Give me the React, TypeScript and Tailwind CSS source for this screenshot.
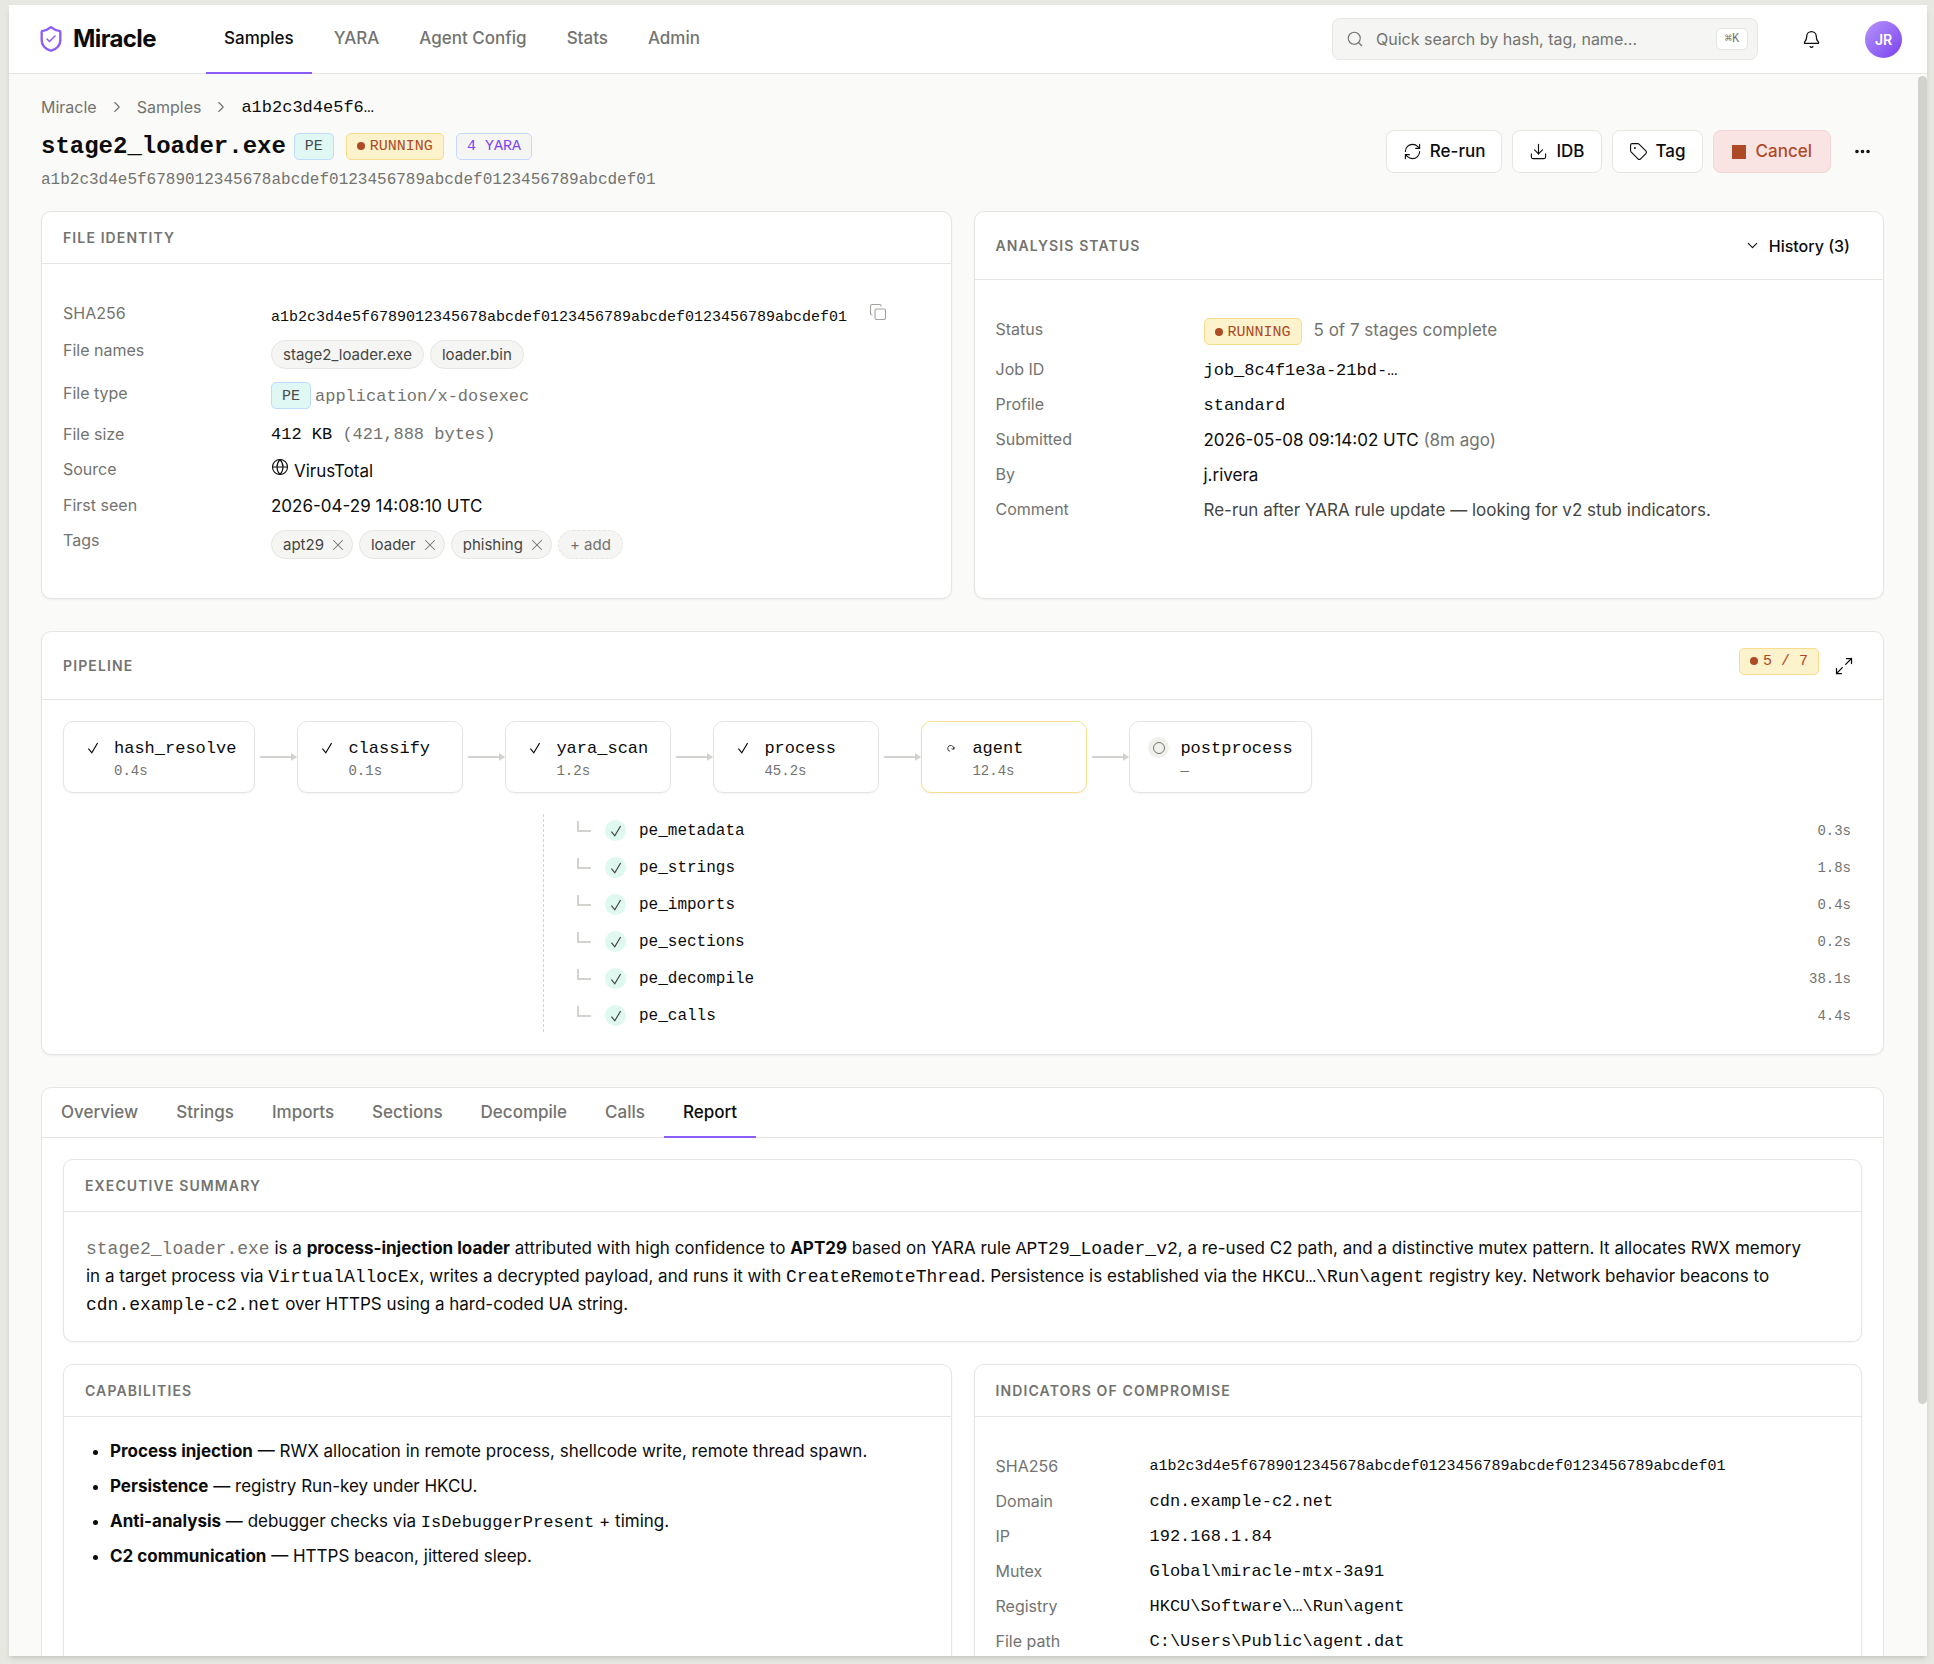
import React from 'react';
import {
    Bell,
    Check,
    ChevronDown,
    ChevronRight,
    Copy,
    Download,
    Ellipsis,
    Globe,
    Maximize2,
    RefreshCw,
    Search,
    Shield,
    Tag,
    X,
} from 'lucide-react';

const mono = "font-['Liberation_Mono',monospace]";

const navItems = ['Samples', 'YARA', 'Agent Config', 'Stats', 'Admin'];
const tabs = ['Overview', 'Strings', 'Imports', 'Sections', 'Decompile', 'Calls', 'Report'];
const sha = 'a1b2c3d4e5f6789012345678abcdef0123456789abcdef0123456789abcdef01';

const stages = [
    { name: 'hash_resolve', time: '0.4s', state: 'done' },
    { name: 'classify', time: '0.1s', state: 'done' },
    { name: 'yara_scan', time: '1.2s', state: 'done' },
    { name: 'process', time: '45.2s', state: 'done' },
    { name: 'agent', time: '12.4s', state: 'running' },
    { name: 'postprocess', time: '—', state: 'pending' },
];

const subStages = [
    { name: 'pe_metadata', time: '0.3s' },
    { name: 'pe_strings', time: '1.8s' },
    { name: 'pe_imports', time: '0.4s' },
    { name: 'pe_sections', time: '0.2s' },
    { name: 'pe_decompile', time: '38.1s' },
    { name: 'pe_calls', time: '4.4s' },
];

const indicators = [
    { label: 'Domain', value: 'cdn.example-c2.net' },
    { label: 'IP', value: '192.168.1.84' },
    { label: 'Mutex', value: 'Global\\miracle-mtx-3a91' },
    { label: 'Registry', value: 'HKCU\\Software\\…\\Run\\agent' },
    { label: 'File path', value: 'C:\\Users\\Public\\agent.dat' },
];

interface CardProps {
    title: string;
    action?: React.ReactNode;
    children: React.ReactNode;
}

const Card: React.FC<CardProps> = ({ title, action, children }) => (
    <section className="min-w-0 rounded-[10px] border border-[#e5e5e2] bg-white shadow-xs">
        <header
            className={`flex items-center justify-between border-b border-[#e5e5e2] px-[21px] ${action ? 'h-[68px]' : 'h-[52px]'}`}
        >
            <h2 className="text-[14px] font-semibold tracking-[0.08em] text-[#73736f] uppercase">{title}</h2>
            {action}
        </header>
        {children}
    </section>
);

interface RowProps {
    label: string;
    height?: string;
    width?: string;
    children: React.ReactNode;
}

const Row: React.FC<RowProps> = ({ label, height = 'h-[26px]', width = 'w-[208px]', children }) => (
    <div className={`flex ${height}`}>
        <dt className={`${width} shrink-0 text-[16px] leading-[22px] text-[#73736f]`}>{label}</dt>
        <dd className="flex min-w-0 items-start text-[17px] leading-6 whitespace-nowrap text-[#0c0c0c]">{children}</dd>
    </div>
);

const PeBadge = () => (
    <span className={`${mono} flex h-[27px] items-center rounded-[5px] border border-[#bfdbfe] bg-[#dff8f4] px-[10px] pt-[2px] text-[15px] text-[#4b4b4b]`}>
        PE
    </span>
);

const RunBadge: React.FC<{ children: React.ReactNode }> = ({ children }) => (
    <span className={`${mono} flex h-[27px] items-center gap-[5px] rounded-[5px] border border-[#f7dd8b] bg-[#fcf2cb] px-[10px] text-[15px] whitespace-pre text-[#ae4a26]`}>
        <span className="size-2 rounded-full bg-[#ae4a26]" />
        <span className="pt-[2px]">{children}</span>
    </span>
);

const Chip: React.FC<{ children: React.ReactNode; removable?: boolean }> = ({ children, removable }) => (
    <span className="flex h-[29px] items-center gap-[5px] rounded-full border border-[#e5e5e2] bg-[#f5f5f3] px-[11px] text-[15px] text-[#454542]">
        {children}
        {removable && (
            <button aria-label="Remove tag" className="-mr-[6px] text-[#73736f]">
                <X size={18} strokeWidth={1.4} />
            </button>
        )}
    </span>
);

const ActionButton: React.FC<{ icon: React.ReactNode; children: React.ReactNode }> = ({ icon, children }) => (
    <button className="flex h-[43px] items-center gap-2 rounded-lg border border-[#e5e5e2] bg-white px-4 text-[17px] font-medium">
        {icon}
        {children}
    </button>
);

const CheckMark = () => (
    <svg width="12" height="12" viewBox="0 0 12 12" fill="none" stroke="currentColor" strokeWidth="1.2">
        <path d="M1.4 6.6 4.8 10.8 10.6 1" />
    </svg>
);

const StageIcon: React.FC<{ state: string }> = ({ state }) => {
    if (state === 'pending') {
        return (
            <span className="flex size-[21px] items-center justify-center rounded-full bg-[#f0f0ed]">
                <span className="size-3 rounded-full border border-[#73736f]" />
            </span>
        );
    }
    return (
        <span className="flex size-[21px] items-center justify-center">
            {state === 'done' ? (
                <CheckMark />
            ) : (
                <svg width="12" height="12" viewBox="0 0 12 12" fill="none" stroke="#454542">
                    <path d="M5.2 9.4A3 3 0 1 1 8.6 7.2M6.4 6.8 8.7 7.4 9.8 5.2" />
                </svg>
            )}
        </span>
    );
};

const Arrow = () => (
    <svg width="42" height="10" viewBox="0 0 42 10" className="shrink-0">
        <path d="M5 4H36V1L42 5L36 9V6H5Z" fill="#d2d2ce" />
    </svg>
);

const Header = () => (
    <header className="flex h-[69px] shrink-0 items-center border-b border-[#e5e5e2] bg-white pr-[25px] pl-[28px]">
        <a href="#" className="flex w-[169px] items-center gap-2">
            <span className="relative flex items-center justify-center text-[#8b5cf6]">
                <Shield size={28} strokeWidth={2} />
                <Check size={12} strokeWidth={3} className="absolute" />
            </span>
            <span className="text-[24px] font-bold tracking-tight">Miracle</span>
        </a>
        <nav className="flex h-[69px] gap-1">
            {navItems.map((item, i) => (
                <a
                    key={item}
                    href="#"
                    className={`flex items-center border-b-2 px-[18px] pt-[2px] text-[17px] font-medium ${i === 0 ? 'border-[#8b5cf6] text-[#0c0c0c]' : 'border-transparent text-[#73736f]'}`}
                >
                    {item}
                </a>
            ))}
        </nav>
        <label className="ml-auto flex h-[42px] w-[426px] items-center rounded-lg border border-[#e5e5e2] bg-[#f5f5f3] pr-[9px] pl-[13px]">
            <Search size={18} strokeWidth={1.5} className="shrink-0 text-[#73736f]" />
            <input
                aria-label="Quick search"
                placeholder="Quick search by hash, tag, name…"
                className="ml-3 min-w-0 flex-1 bg-transparent text-[16px] outline-none placeholder:text-[#73736f]"
            />
            <kbd className={`${mono} flex h-[22px] w-8 items-center justify-center rounded-[5px] border border-[#e5e5e2] bg-white text-[12px] text-[#73736f]`}>
                ⌘K
            </kbd>
        </label>
        <button aria-label="Notifications" className="ml-[44px]">
            <Bell size={19} strokeWidth={1.6} />
        </button>
        <button className="ml-[44px] flex size-[37px] items-center justify-center rounded-full bg-linear-to-br from-[#b794fb] to-[#7c3aed] text-[14px] font-semibold text-white">
            JR
        </button>
    </header>
);

const Title = () => (
    <div>
        <nav aria-label="Breadcrumb" className="flex h-6 items-center text-[16px] text-[#73736f]">
            <a href="#">Miracle</a>
            <ChevronRight size={18} strokeWidth={1.5} className="mx-[11px]" />
            <a href="#">Samples</a>
            <ChevronRight size={18} strokeWidth={1.5} className="mx-[11px]" />
            <span className={`${mono} pt-px text-[17px] text-[#0c0c0c]`}>a1b2c3d4e5f6…</span>
        </nav>
        <div className="mt-[8px] flex items-start justify-between">
            <div>
                <div className="flex h-[38px] items-center">
                    <h1 className={`${mono} mr-2 pt-px text-[24px] font-bold`}>stage2_loader.exe</h1>
                    <div className="flex gap-3">
                        <PeBadge />
                        <RunBadge>RUNNING</RunBadge>
                        <span className={`${mono} flex h-[27px] items-center rounded-[5px] border border-[#c7d7fe] bg-[#f5f5f3] px-[10px] pt-[2px] text-[15px] text-[#8045f0]`}>
                            4 YARA
                        </span>
                    </div>
                </div>
                <p className={`${mono} mt-[3px] text-[16px] leading-6 text-[#73736f]`}>{sha}</p>
            </div>
            <div className="mt-[3px] flex items-center gap-[10px]">
                <ActionButton icon={<RefreshCw size={19} strokeWidth={1.4} />}>Re-run</ActionButton>
                <ActionButton icon={<Download size={19} strokeWidth={1.4} />}>IDB</ActionButton>
                <ActionButton icon={<Tag size={19} strokeWidth={1.4} />}>Tag</ActionButton>
                <button className="flex h-[43px] items-center gap-[10px] rounded-lg border border-[#f3d5d5] bg-[#f9e3e3] px-[18px] text-[17px] font-medium text-[#ae4a26]">
                    <span className="size-[14px] bg-[#ae4a26]" />
                    Cancel
                </button>
                <button aria-label="More actions" className="flex h-[43px] w-[43px] items-center justify-center">
                    <Ellipsis size={19} strokeWidth={2.5} />
                </button>
            </div>
        </div>
    </div>
);

const FileIdentity = () => (
    <Card title="File identity">
        <dl className="flex flex-col gap-[9px] px-[21px] pt-[38px] pb-[34px]">
            <Row label="SHA256" height="h-[28px]">
                <span className={`${mono} pt-1 text-[15px]`}>{sha}</span>
                <button aria-label="Copy hash" className="mt-px ml-[22px] text-[#a3a39f]">
                    <Copy size={18} strokeWidth={1.5} />
                </button>
            </Row>
            <Row label="File names" height="h-[34px]">
                <div className="flex gap-[6px] pt-px">
                    <Chip>stage2_loader.exe</Chip>
                    <Chip>loader.bin</Chip>
                </div>
            </Row>
            <Row label="File type" height="h-[32px]">
                <PeBadge />
                <span className={`${mono} ml-1 pt-[3px] text-[#73736f]`}>application/x-dosexec</span>
            </Row>
            <Row label="File size">
                <span className={`${mono} whitespace-pre`}>
                    412 KB <span className="text-[#73736f]">(421,888 bytes)</span>
                </span>
            </Row>
            <Row label="Source" height="h-[27px]">
                <Globe size={18} strokeWidth={1.5} className="mr-[5px]" />
                <span className="pt-px">VirusTotal</span>
            </Row>
            <Row label="First seen">2026-04-29 14:08:10 UTC</Row>
            <Row label="Tags" height="h-[35px]">
                <div className="flex gap-[6px] pt-px">
                    <Chip removable>apt29</Chip>
                    <Chip removable>loader</Chip>
                    <Chip removable>phishing</Chip>
                    <button className="flex h-[29px] items-center rounded-full border border-dashed border-[#e5e5e2] bg-[#f5f5f3] px-[11px] text-[15px] text-[#73736f]">
                        + add
                    </button>
                </div>
            </Row>
        </dl>
    </Card>
);

const AnalysisStatus = () => (
    <Card
        title="Analysis status"
        action={
            <button className="flex items-center gap-2 pr-[12px] text-[16px] font-medium">
                <ChevronDown size={17} strokeWidth={1.6} />
                History (3)
            </button>
        }
    >
        <dl className="flex flex-col gap-[9px] px-[21px] pt-[38px] pb-[35px]">
            <Row label="Status" height="h-[31px]">
                <RunBadge>RUNNING</RunBadge>
                <span className="ml-3 text-[#73736f]">5 of 7 stages complete</span>
            </Row>
            <Row label="Job ID">
                <span className={`${mono} pt-px`}>job_8c4f1e3a-21bd-…</span>
            </Row>
            <Row label="Profile">
                <span className={`${mono} pt-px`}>standard</span>
            </Row>
            <Row label="Submitted">
                2026-05-08 09:14:02 UTC&nbsp;<span className="text-[#73736f]">(8m ago)</span>
            </Row>
            <Row label="By">j.rivera</Row>
            <Row label="Comment">
                <span className="text-[#454542]">Re-run after YARA rule update — looking for v2 stub indicators.</span>
            </Row>
        </dl>
    </Card>
);

const Pipeline = () => (
    <Card
        title="Pipeline"
        action={
            <div className="flex items-start gap-[7px]">
                <RunBadge>5 / 7</RunBadge>
                <button aria-label="Expand pipeline" className="flex size-9 items-center justify-center">
                    <Maximize2 size={20} strokeWidth={1.5} />
                </button>
            </div>
        }
    >
        <div className="px-[21px] pt-[21px] pb-[22px]">
            <ol className="flex items-center">
                {stages.map((stage, i) => (
                    <li key={stage.name} className="flex items-center">
                        {i > 0 && <Arrow />}
                        <div
                            className={`flex h-[72px] min-w-[166px] gap-[11px] rounded-[10px] border bg-white pt-[15px] pr-[18px] pl-[18px] shadow-xs ${stage.state === 'running' ? 'border-[#f5df8c]' : 'border-[#e5e5e2]'}`}
                        >
                            <StageIcon state={stage.state} />
                            <div className={mono}>
                                <div className="text-[17px] leading-6">{stage.name}</div>
                                <div className="text-[14px] leading-5 text-[#73736f]">{stage.time}</div>
                            </div>
                        </div>
                    </li>
                ))}
            </ol>
            <ul className={`${mono} mt-[21px] ml-[480px] flex flex-col gap-[6px] border-l border-dashed border-[#d2d2ce] py-px pr-[11px] pl-[33px]`}>
                {subStages.map((stage) => (
                    <li key={stage.name} className="flex h-[31px] items-center">
                        <span className="mb-2 h-[11px] w-[14px] border-b-2 border-l-2 border-[#d2d2ce]" />
                        <span className="mr-[13px] ml-[14px] flex size-[21px] items-center justify-center rounded-full bg-[#dff8f0] text-[#454542]">
                            <CheckMark />
                        </span>
                        <span className="pt-px text-[16px]">{stage.name}</span>
                        <span className="ml-auto pt-px text-[14px] text-[#73736f]">{stage.time}</span>
                    </li>
                ))}
            </ul>
        </div>
    </Card>
);

const Code: React.FC<{ children: React.ReactNode; size?: string }> = ({ children, size = 'text-[18px]' }) => (
    <code className={`${mono} ${size} leading-none whitespace-nowrap`}>{children}</code>
);

const Report = () => (
    <section className="rounded-[10px] border border-[#e5e5e2] bg-white">
        <div role="tablist" className="flex h-[50px] border-b border-[#e5e5e2]">
            {tabs.map((tab) => (
                <button
                    key={tab}
                    role="tab"
                    aria-selected={tab === 'Report'}
                    className={`-mb-px border-b-2 px-[19px] pt-[2px] text-[17px] font-medium ${tab === 'Report' ? 'border-[#8b5cf6] text-[#0c0c0c]' : 'border-transparent text-[#73736f]'}`}
                >
                    {tab}
                </button>
            ))}
        </div>
        <div className="flex flex-col gap-[22px] p-[21px]">
            <Card title="Executive summary">
                <p className="pt-[22px] pr-[46px] pb-[23px] pl-[22px] text-[17px] leading-7">
                    <span className="text-[#73736f]">
                        <Code>stage2_loader.exe</Code>
                    </span>{' '}
                    is a <strong>process-injection loader</strong> attributed with high confidence to <strong>APT29</strong> based
                    on YARA rule <Code>APT29_Loader_v2</Code>, a re-used C2 path, and a distinctive mutex pattern. It allocates RWX
                    memory in a target process via <Code>VirtualAllocEx</Code>, writes a decrypted payload, and runs it with{' '}
                    <Code>CreateRemoteThread</Code>. Persistence is established via the <Code>HKCU…\Run\agent</Code> registry key.
                    Network behavior beacons to <Code>cdn.example-c2.net</Code> over HTTPS using a hard-coded UA string.
                </p>
            </Card>
            <div className="grid grid-cols-2 gap-[22px]">
                <Card title="Capabilities">
                    <ul className="flex list-disc flex-col gap-[7px] py-5 pr-[21px] pl-[46px] text-[17px] leading-7">
                        <li>
                            <strong>Process injection</strong> — RWX allocation in remote process, shellcode write, remote thread spawn.
                        </li>
                        <li>
                            <strong>Persistence</strong> — registry Run-key under HKCU.
                        </li>
                        <li>
                            <strong>Anti-analysis</strong> — debugger checks via <Code size="text-[17px]">IsDebuggerPresent</Code> + timing.
                        </li>
                        <li>
                            <strong>C2 communication</strong> — HTTPS beacon, jittered sleep.
                        </li>
                    </ul>
                </Card>
                <Card title="Indicators of compromise">
                    <dl className="flex flex-col gap-[9px] px-[21px] pt-[38px] pb-[35px]">
                        <Row label="SHA256" width="w-[154px]">
                            <span className={`${mono} text-[15px]`}>{sha}</span>
                        </Row>
                        {indicators.map((item) => (
                            <Row key={item.label} label={item.label} width="w-[154px]">
                                <span className={mono}>{item.value}</span>
                            </Row>
                        ))}
                    </dl>
                </Card>
            </div>
        </div>
    </section>
);

export default function App() {
    return (
        <div className="h-screen bg-[#e8e8e3] pt-[5px] pr-[7px] pb-[8px] pl-[9px] font-['Inter',sans-serif] text-[#0c0c0c]">
            <div className="relative flex h-full flex-col overflow-hidden bg-[#fafaf8] shadow-md">
                <Header />
                <main className="min-h-0 flex-1 overflow-hidden pt-[21px] pr-[43px] pl-[32px]">
                    <Title />
                    <div className="mt-[19px] flex flex-col gap-[32px]">
                        <div className="grid grid-cols-2 gap-[22px]">
                            <FileIdentity />
                            <AnalysisStatus />
                        </div>
                        <Pipeline />
                        <Report />
                    </div>
                </main>
                <div className="absolute top-[71px] right-0 h-[84%] max-h-[1328px] w-[9px] rounded-full bg-[#d2d2ce]" />
            </div>
        </div>
    );
}
